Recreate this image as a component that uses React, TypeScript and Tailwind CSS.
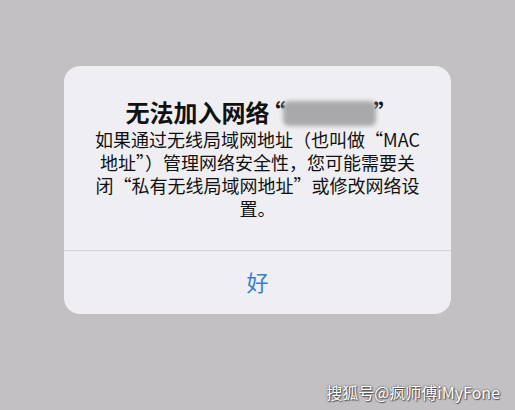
export default function App() {
  const cjk = { fontFamily: '"Noto Sans CJK SC", "Noto Sans", sans-serif' };
  return (
    <div className="relative h-[410px] w-[515px] overflow-hidden bg-[#c2c0c3]" style={cjk}>
      <div className="flex justify-center pt-[66px]">
        <div className="w-[387px] rounded-[16px] bg-[#efeef2]">
          <div className="px-4 pt-[32px] pb-[30px] text-center text-[#111]">
            <div className="flex items-center justify-center text-[24px] font-bold leading-[28px]">
              <span>无法加入网络</span>
              <span className="-ml-[8px] -mr-[3px]">“</span>
              <span className="mt-[2px] h-[25px] w-[93px] rounded-[6px] bg-[#a9a8ab] blur-[2px]" />
              <span className="-ml-[2px] -mr-[8px]">”</span>
            </div>
            <div className="mt-[2px] text-[18px] leading-[23px]">
              <div>如果通过无线局域网地址（也叫做“MAC</div>
              <div>地址”）管理网络安全性，您可能需要关</div>
              <div>闭“私有无线局域网地址”或修改网络设</div>
              <div>置。</div>
            </div>
          </div>
          <div className="h-px bg-[#d5d4d8]" />
          <div className="flex h-[63px] items-center justify-center pb-[3px] text-[22px] text-[#3a80cf]">
            好
          </div>
        </div>
      </div>
      <div className="absolute right-[15px] bottom-[8px] text-[16px] leading-[20px] text-white [text-shadow:0_0_2px_rgba(0,0,0,0.7),1px_1px_1px_rgba(0,0,0,0.5)]">
        搜狐号@疯师傅iMyFone
      </div>
    </div>
  );
}
